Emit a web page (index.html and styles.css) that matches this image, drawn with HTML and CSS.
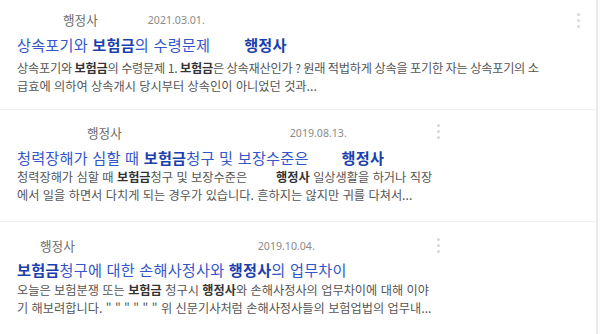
FILE: index.html
```html
<!DOCTYPE html>
<html lang="ko">
<head>
<meta charset="utf-8">
<link rel="stylesheet" href="styles.css">
</head>
<body>
<div class="list">
  <div class="card card-1">
    <div class="meta meta-1"><span class="src">행정사</span><span class="date">2021.03.01.</span></div>
    <a class="title">상속포기와 <b>보험금</b>의 수령문제<span class="gap g36"></span><b>행정사</b></a>
    <p class="snippet"><span class="line tight">상속포기와 <b>보험금</b>의 수령문제 1. <b>보험금</b>은 상속재산인가 ? 원래 적법하게 상속을 포기한 자는 상속포기의 소</span><span class="line">급효에 의하여 상속개시 당시부터 상속인이 아니었던 것과...</span></p>
    <span class="kebab k-1"><i></i><i></i><i></i></span>
  </div>
  <div class="card card-2">
    <div class="meta meta-2"><span class="src">행정사</span><span class="date">2019.08.13.</span></div>
    <a class="title">청력장해가 심할 때 <b>보험금</b>청구 및 보장수준은<span class="gap g33"></span><b>행정사</b></a>
    <p class="snippet"><span class="line">청력장해가 심할 때 <b>보험금</b>청구 및 보장수준은<span class="gap g30"></span><b>행정사</b> 일상생활을 하거나 직장</span><span class="line">에서 일을 하면서 다치게 되는 경우가 있습니다. 흔하지는 않지만 귀를 다쳐서...</span></p>
    <span class="kebab k-2"><i></i><i></i><i></i></span>
  </div>
  <div class="card card-3">
    <div class="meta meta-3"><span class="src">행정사</span><span class="date">2019.10.04.</span></div>
    <a class="title"><b>보험금</b>청구에 대한 손해사정사와 <b>행정사</b>의 업무차이</a>
    <p class="snippet"><span class="line">오늘은 보험분쟁 또는 <b>보험금</b> 청구시 <b>행정사</b>와 손해사정사의 업무차이에 대해 이야</span><span class="line">기 해보려합니다. " " " " " " 위 신문기사처럼 손해사정사들의 보험업법의 업무내...</span></p>
    <span class="kebab k-3"><i></i><i></i><i></i></span>
  </div>
</div>
</body>
</html>
```

FILE: styles.css
```css
html, body {
  margin: 0;
  padding: 0;
  background: #ffffff;
}
body {
  font-family: "Noto Sans CJK KR", "Noto Sans", sans-serif;
  width: 600px;
  height: 334px;
  overflow: hidden;
}
.list {
  width: 596px;
  height: 334px;
  border-right: 2px solid #ebebeb;
  background: #fff;
}
.card {
  position: relative;
  box-sizing: border-box;
  padding-left: 17px;
  border-bottom: 1px solid #eef0f3;
}
.card-1 { height: 110px; padding-top: 12px; }
.card-2 { height: 112px; padding-top: 15px; }
.card-3 { padding-top: 16px; border-bottom: none; }

.meta {
  display: flex;
  align-items: center;
  height: 16px;
  line-height: 16px;
}
.src { color: #6b6b6b; font-size: 12.6px; }
.date {
  color: #8a8a8a;
  font-family: "Noto Sans", "Liberation Sans", sans-serif;
  font-size: 10.6px;
}
.meta-1 .src { margin-left: 46px; }
.meta-1 .date { margin-left: 50px; }
.meta-2 .src { margin-left: 70px; }
.meta-2 .date { margin-left: 168px; }
.meta-3 .src { margin-left: 23px; }
.meta-3 .date { margin-left: 183px; }

.title {
  display: block;
  height: 20px;
  font-size: 15.2px;
  line-height: 20px;
  letter-spacing: 0.2px;
  color: #3356c9;
  white-space: nowrap;
}
.card-1 .title { margin-top: 6px; }
.card-2 .title { margin-top: 6px; }
.card-3 .title { margin-top: 5px; }
.title b { color: #1c3fae; font-weight: 700; }

.gap { display: inline-block; }
.g36 { width: 34px; }
.g33 { width: 33px; }
.g30 { width: 29px; }

.snippet {
  margin: 0;
  font-size: 12.2px;
  line-height: 18px;
  color: #555;
}
.card-1 .snippet { margin-top: 5px; }
.card-2 .snippet { margin-top: 1px; }
.card-3 .snippet { margin-top: 2px; }
.snippet b { color: #333; font-weight: 700; }
.line { display: block; white-space: nowrap; }
.tight { word-spacing: -0.6px; letter-spacing: -0.22px; }

.kebab {
  position: absolute;
  display: flex;
  flex-direction: column;
  gap: 3px;
}
.kebab i {
  display: block;
  width: 3px;
  height: 3px;
  border-radius: 50%;
  background: #d8d8d8;
}
.k-1 { left: 577px; top: 13px; }
.k-2 { left: 437px; top: 14px; }
.k-3 { left: 437px; top: 16px; }
```
